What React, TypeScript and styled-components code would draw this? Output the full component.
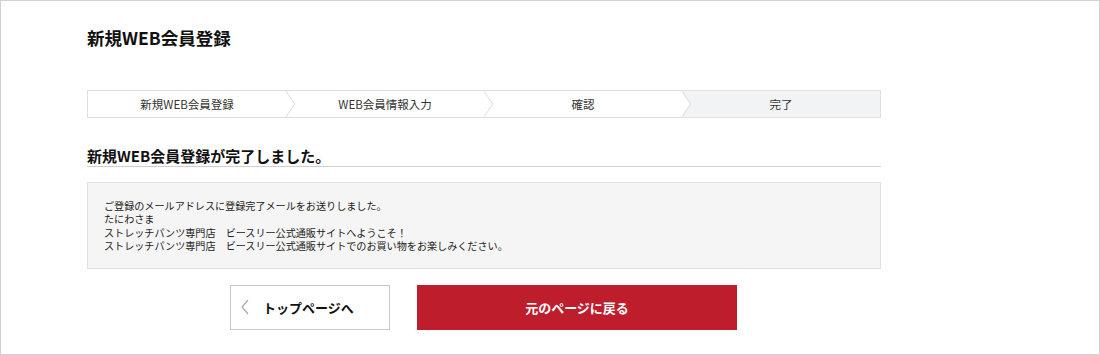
import React from "react";
import styled, { createGlobalStyle } from "styled-components";

const GlobalStyle = createGlobalStyle`
  body {
    margin: 0;
    background: #fff;
    font-family: "Noto Sans CJK JP", "Noto Sans", sans-serif;
    color: #222;
  }
`;

const Page = styled.div`
  box-sizing: border-box;
  width: 1100px;
  height: 355px;
  border: 1px solid #d2d2d2;
  overflow: hidden;
`;

const Content = styled.div`
  width: 794px;
  padding: 25px 0 0 86px;
`;

const Title = styled.h1`
  margin: 0;
  font-size: 17.5px;
  line-height: 24px;
  font-weight: 700;
  color: #111;
`;

const Steps = styled.ol`
  display: flex;
  margin: 40px 0 0;
  padding: 0;
  list-style: none;
  height: 28px;
  box-sizing: border-box;
  border: 1px solid #dedede;
`;

const Step = styled.li<{ $current?: boolean }>`
  position: relative;
  flex: 1;
  display: flex;
  align-items: center;
  justify-content: center;
  font-size: 11.5px;
  color: #333;
  background: ${(p) => (p.$current ? "#f2f3f5" : "#fff")};
`;

const Arrow = styled.svg`
  position: absolute;
  top: 0;
  right: -9px;
  width: 10px;
  height: 100%;
  z-index: 1;
`;

const Heading = styled.h2`
  margin: 28px 0 0;
  padding-bottom: 1px;
  font-size: 15px;
  line-height: 19px;
  font-weight: 700;
  color: #111;
  border-bottom: 1px solid #cfcfcf;
`;

const MessageBox = styled.div`
  margin-top: 15px;
  padding: 16px 16px 15px;
  background: #f5f5f5;
  border: 1px solid #e0e0e0;
  font-size: 10.1px;
  line-height: 13.4px;
  color: #222;
`;

const ButtonRow = styled.div`
  display: flex;
  justify-content: center;
  gap: 27px;
  margin-top: 16px;
  padding-right: 1px;
`;

const BackButton = styled.button`
  box-sizing: border-box;
  width: 160px;
  height: 45px;
  display: flex;
  align-items: center;
  gap: 13px;
  padding: 0 0 0 9px;
  background: #fff;
  border: 1px solid #c8c8c8;
  font-family: inherit;
  font-size: 13px;
  font-weight: 700;
  color: #111;
  cursor: pointer;
`;

const PrimaryButton = styled.button`
  box-sizing: border-box;
  width: 320px;
  height: 45px;
  background: #be1d2c;
  border: none;
  font-family: inherit;
  font-size: 13px;
  font-weight: 700;
  color: #fff;
  cursor: pointer;
`;

const steps = ["新規WEB会員登録", "WEB会員情報入力", "確認", "完了"];

const lines = [
  "ご登録のメールアドレスに登録完了メールをお送りしました。",
  "たにわさま",
  "ストレッチパンツ専門店　ビースリー公式通販サイトへようこそ！",
  "ストレッチパンツ専門店　ビースリー公式通販サイトでのお買い物をお楽しみください。",
];

export default function App() {
  return (
    <>
      <GlobalStyle />
      <Page>
        <Content>
          <Title>新規WEB会員登録</Title>
          <Steps>
            {steps.map((s, i) => (
              <Step key={s} $current={i === steps.length - 1}>
                {s}
                {i < steps.length - 1 && (
                  <Arrow viewBox="0 0 10 26" preserveAspectRatio="none">
                    <polygon points="0,0 1,0 9.5,13 1,26 0,26" fill="#fff" />
                    <polyline
                      points="1,0 9.5,13 1,26"
                      fill="none"
                      stroke="#dcdcdc"
                      strokeWidth="1"
                    />
                  </Arrow>
                )}
              </Step>
            ))}
          </Steps>
          <Heading>新規WEB会員登録が完了しました。</Heading>
          <MessageBox>
            {lines.map((l) => (
              <div key={l}>{l}</div>
            ))}
          </MessageBox>
          <ButtonRow>
            <BackButton>
              <svg width="10" height="16" viewBox="0 0 10 16">
                <polyline points="8,1 2,8 8,15" fill="none" stroke="#aaa" strokeWidth="1.2" />
              </svg>
              トップページへ
            </BackButton>
            <PrimaryButton>元のページに戻る</PrimaryButton>
          </ButtonRow>
        </Content>
      </Page>
    </>
  );
}
